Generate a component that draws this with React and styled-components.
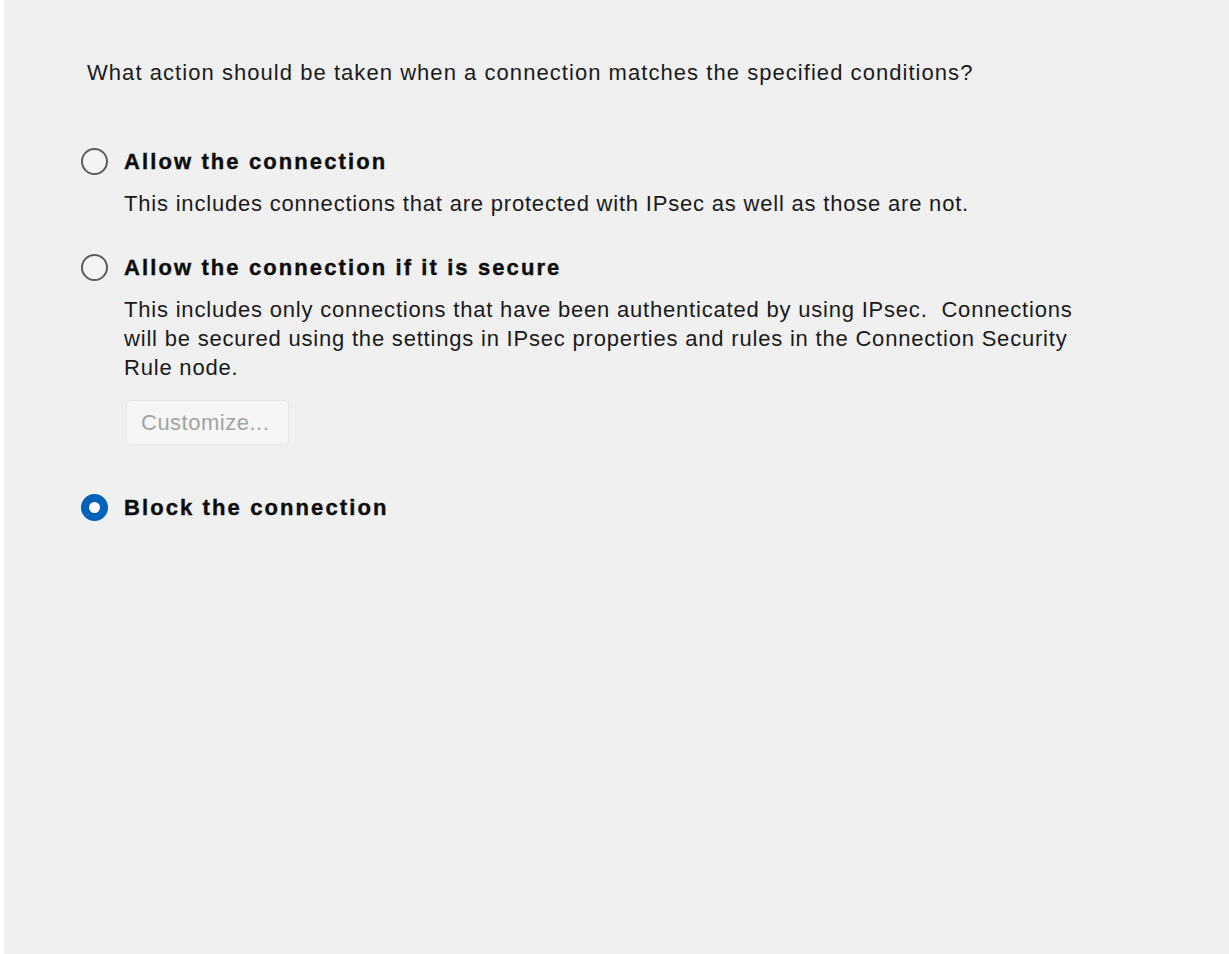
import React from 'react';
import styled, { createGlobalStyle } from 'styled-components';

const GlobalStyle = createGlobalStyle`
  html, body {
    margin: 0;
    padding: 0;
    background: #f0f0f0;
  }
  body {
    font-family: "Liberation Sans", Arial, sans-serif;
  }
`;

const Page = styled.main`
  box-sizing: border-box;
  min-height: 954px;
  border-left: 4px solid #ffffff;
  background: #f0f0f0;
  padding: 58px 0 0 77px;
  color: #1a1a1a;
  font-size: 22px;
  line-height: 29px;
  letter-spacing: 1px;
`;

const Question = styled.p`
  margin: 0 0 0 6px;
  letter-spacing: 1.05px;
`;

const OptionList = styled.div`
  display: flex;
  flex-direction: column;
  margin-top: 60px;
`;

const Option = styled.div`
  display: flex;
  flex-direction: column;
  margin-top: ${p => p.$gap || 0}px;
`;

const OptionRow = styled.label`
  display: flex;
  align-items: center;
  gap: 16px;
  height: 29px;
  cursor: default;
`;

const Radio = styled.span`
  box-sizing: border-box;
  flex: none;
  width: 27px;
  height: 27px;
  border-radius: 50%;
  border: ${p => (p.$checked ? '8.5px solid #0063b9' : '2px solid #5c5c5c')};
  background: ${p => (p.$checked ? '#ffffff' : '#f4f4f4')};
`;

const OptionTitle = styled.span`
  font-weight: 700;
  color: #0d0d0d;
  letter-spacing: 2.1px;
  -webkit-text-stroke: 0.4px #0d0d0d;
`;

const Description = styled.p`
  margin: 13px 0 0 43px;
  max-width: 980px;
  white-space: pre-wrap;
  letter-spacing: 0.8px;
`;

const CustomizeButton = styled.button`
  align-self: flex-start;
  box-sizing: border-box;
  margin: 18px 0 0 45px;
  width: 163px;
  height: 45px;
  padding: 0 0 0 14px;
  text-align: left;
  border: 1.5px solid #e6e6e6;
  border-radius: 5px;
  background: #f6f6f6;
  color: #a3a3a3;
  font-family: inherit;
  font-size: 22px;
  letter-spacing: 0.5px;
`;

const options = [
  {
    id: 'allow',
    title: 'Allow the connection',
    text: 'This includes connections that are protected with IPsec as well as those are not.',
  },
  {
    id: 'secure',
    title: 'Allow the connection if it is secure',
    text: 'This includes only connections that have been authenticated by using IPsec.  Connections\nwill be secured using the settings in IPsec properties and rules in the Connection Security\nRule node.',
    customize: true,
    gap: 35,
  },
  {
    id: 'block',
    title: 'Block the connection',
    checked: true,
    gap: 48,
  },
];

export default function App() {
  return (
    <>
      <GlobalStyle />
      <Page>
        <Question>What action should be taken when a connection matches the specified conditions?</Question>
        <OptionList>
          {options.map(option => (
            <Option key={option.id} $gap={option.gap}>
              <OptionRow>
                <Radio $checked={option.checked} />
                <OptionTitle>{option.title}</OptionTitle>
              </OptionRow>
              {option.text && <Description>{option.text}</Description>}
              {option.customize && <CustomizeButton disabled>Customize...</CustomizeButton>}
            </Option>
          ))}
        </OptionList>
      </Page>
    </>
  );
}
